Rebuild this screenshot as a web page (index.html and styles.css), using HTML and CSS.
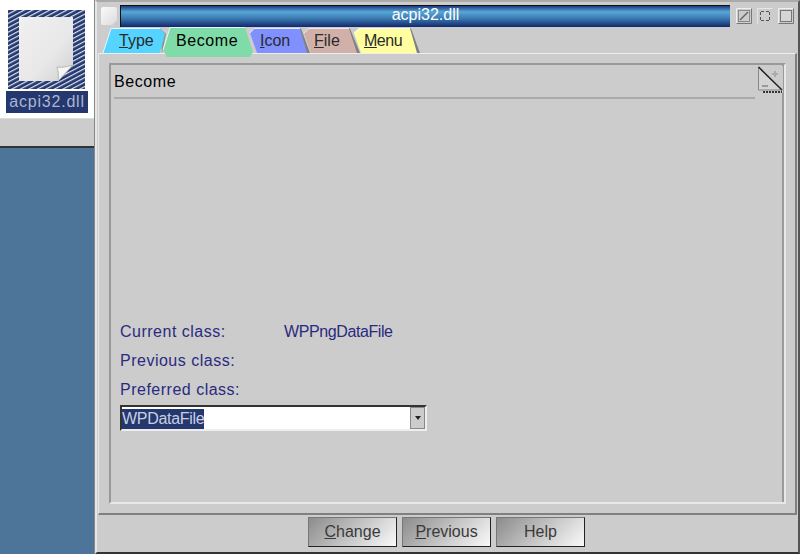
FILE: index.html
```html
<!DOCTYPE html>
<html lang="en">
<head>
<meta charset="utf-8">
<title>acpi32.dll</title>
<link rel="stylesheet" href="styles.css">
</head>
<body>
<div class="desktop">
  <aside class="folder">
    <div class="icon-pane">
      <svg class="doc" width="82" height="80" viewBox="0 0 82 80">
        <defs>
          <pattern id="hatch" width="4" height="4" patternUnits="userSpaceOnUse" patternTransform="rotate(-28)">
            <rect width="4" height="4" fill="#24386f"/>
            <rect width="4" height="1.2" fill="#dfe4ee"/>
          </pattern>
          <linearGradient id="paper" x1="0" y1="0" x2="1" y2="1">
            <stop offset="0" stop-color="#f0f0f0"/>
            <stop offset=".6" stop-color="#e8e8e8"/>
            <stop offset="1" stop-color="#cfcfcf"/>
          </linearGradient>
        </defs>
        <rect x="2" y="0" width="77" height="79" fill="url(#hatch)"/>
        <path d="M.5 37V79.500H81.500V37" fill="none" stroke="#fff" stroke-dasharray="2 1"/>
        <path d="M13 7H67V55L52 71H13Z" fill="url(#paper)"/>
        <path d="M52 71C53 66 52 60 51 57C57 58 63 56 67 55Z" fill="#f6f6f6" stroke="#b8b8b8"/>
      </svg>
      <div class="file-name">acpi32.dll</div>
    </div>
    <div class="folder-strip"></div>
  </aside>
  <main class="window">
    <header class="titlebar">
      <span class="sysmenu"></span>
      <h1 class="title">acpi32.dll</h1>
      <div class="controls">
        <svg width="16" height="16" viewBox="0 0 16 16"><path d="M.5 15.500V.5H15.500" fill="none" stroke="#f0f0f0"/><path d="M.5 15.500H15.500V.5" fill="none" stroke="#777"/><rect x="2.500" y="2.500" width="11" height="11" fill="none" stroke="#8a8a8a"/><path d="M4 12L12 4" stroke="#666" stroke-width="1.500"/></svg>
        <svg width="16" height="16" viewBox="0 0 16 16"><path d="M.5 15.500V.5H15.500" fill="none" stroke="#e6e6e6"/><path d="M4 3.500H7M9 3.500H12M4 12.500H7M9 12.500H12M3.500 4V7M3.500 9V12M12.500 4V7M12.500 9V12" stroke="#555"/></svg>
        <svg width="16" height="16" viewBox="0 0 16 16"><path d="M.5 15.500V.5H15.500" fill="none" stroke="#f0f0f0"/><path d="M.5 15.500H15.500V.5" fill="none" stroke="#777"/><rect x="2.500" y="2.500" width="11" height="11" fill="#d6d6d6" stroke="#777"/></svg>
      </div>
    </header>
    <nav class="tabs">
      <div class="tab tab-type"><svg class="tab-shape" width="65" height="25" viewBox="0 0 65 25"><path d="M57 .5L63 6L59 25" fill="#8a8a8a"/><path d="M0 25L8 .5H57L62 6L57 25Z" fill="#55d4ff"/><path d="M0 25L8 .5H57" fill="none" stroke="#e8f8ff"/></svg><span class="tab-label"><u>T</u>ype</span></div>
      <div class="tab tab-become"><svg class="tab-shape" width="92" height="30" viewBox="0 0 92 30"><path d="M0 23L7 .5H82L90 25L87 30H4Z" fill="#7fdca8"/><path d="M0 23L7 .5H82" fill="none" stroke="#eafaf0"/></svg><span class="tab-label"><span class="tab-current">Become</span></span></div>
      <div class="tab tab-icon"><svg class="tab-shape" width="58" height="25" viewBox="0 0 58 25"><path d="M50 .5L59 25H54L48 .5Z" fill="#808080"/><path d="M-1 5L3 .5H49L56 25H6Z" fill="#8090ff"/><path d="M-1 5L3 .5H49" fill="none" stroke="#e4e8ff"/></svg><span class="tab-label"><u>I</u>con</span></div>
      <div class="tab tab-file"><svg class="tab-shape" width="58" height="25" viewBox="0 0 58 25"><path d="M46 .5L56 25H52L44 .5Z" fill="#808080"/><path d="M0 5L5 .5H45L53 25H7Z" fill="#d0b0a8"/><path d="M0 5L5 .5H45" fill="none" stroke="#f2e8e4"/></svg><span class="tab-label"><u>F</u>ile</span></div>
      <div class="tab tab-menu"><svg class="tab-shape" width="67" height="25" viewBox="0 0 67 25"><path d="M57 .5L66 25H62L55 .5Z" fill="#808080"/><path d="M0 5L5 .5H56L63 25H7Z" fill="#ffffa0"/><path d="M0 5L5 .5H56" fill="none" stroke="#fffff0"/></svg><span class="tab-label"><u>M</u>enu</span></div>
    </nav>
    <section class="notebook">
      <div class="page">
        <div class="page-head">
          <h2 class="page-title">Become</h2>
          <svg class="pager" width="25" height="27" viewBox="0 0 25 27"><path d="M.5 1V24H24Z" fill="#d4d4d4" stroke="#888"/><path d="M.5 1L24 24" stroke="#222" stroke-width="1.500"/><path d="M5 26H24" stroke="#333" stroke-width="2" stroke-dasharray="2 1"/><path d="M4 20H10" stroke="#999" stroke-width="2"/><path d="M14 8H20M17 5V11" stroke="#aaa" stroke-width="2"/></svg>
        </div>
        <div class="form">
          <div class="row"><span class="label">Current class:</span><span class="value">WPPngDataFile</span></div>
          <div class="row"><span class="label">Previous class:</span></div>
          <div class="row"><span class="label">Preferred class:</span></div>
          <div class="combo">
            <div class="combo-field"><span class="combo-selected">WPDataFile</span></div>
            <div class="combo-btn"><span class="combo-arrow"></span></div>
          </div>
        </div>
      </div>
    </section>
    <footer class="buttons">
      <button class="btn"><u>C</u>hange</button>
      <button class="btn"><u>P</u>revious</button>
      <button class="btn">Help</button>
    </footer>
  </main>
</div>
</body>
</html>
```
FILE: styles.css
```css
* { box-sizing: border-box; }
html, body { margin: 0; padding: 0; }
body { width: 800px; height: 554px; overflow: hidden; font-family: "Liberation Sans", Arial, sans-serif; }
.desktop { position: relative; width: 800px; height: 554px; background: #4d7599; }
.folder { width: 95px; }
.icon-pane { height: 118px; background: #fff; display: flex; flex-direction: column; align-items: center; padding: 10px 1px 0 0; }
.doc { display: block; flex: none; }
.file-name { width: 82px; height: 22px; margin-top: 1px; background: #24386f; color: #aab6d0; font-size: 16px; line-height: 22px; text-align: center; letter-spacing: .8px; }
.folder-strip { height: 30px; background: #cccccc; border-top: 1px solid #ddd; border-bottom: 2px solid #333; }
.window { position: absolute; left: 95px; top: 0; width: 705px; height: 554px; background: #cccccc; border: 2px solid; border-color: #aaa #555 #333 #e6e6e6; box-shadow: -1px 0 0 #888; display: flex; flex-direction: column; padding-top: 3px; }
.titlebar { height: 22px; display: flex; align-items: stretch; padding: 0 1px 0 4px; gap: 3px; }
.sysmenu { width: 16px; height: 18px; margin-top: 2px; background: linear-gradient(135deg, #fafafa, #e2e2e2 80%, #bbb); border-radius: 2px; }
.title { flex: 1; margin: 0; height: 22px; border-left: 1px solid #111; border-top: 1px solid #111; background: linear-gradient(#1c3a80 0, #58a8d8 28%, #3a78b0 60%, #12296c 100%); color: #fff; font-size: 16px; font-weight: 400; line-height: 18px; text-align: center; }
.controls { width: 64px; display: flex; justify-content: space-between; align-items: center; padding: 0 3px; }
.tabs { height: 25px; margin-top: 1px; position: relative; z-index: 1; display: flex; padding-left: 6px; }
.tab { position: relative; height: 25px; flex: none; }
.tab-shape { position: absolute; left: 0; top: 0; display: block; overflow: visible; }
.tab-label { position: relative; display: block; color: #2a2a2a; font-size: 16px; line-height: 26px; }
.tab-type { width: 60px; }
.tab-type .tab-label { padding-left: 16px; }
.tab-become { width: 88px; margin-top: -1px; height: 30px; }
.tab-become .tab-label { padding-left: 13px; color: #000; line-height: 28px; letter-spacing: .6px; }
.tab-icon { width: 53px; }
.tab-icon .tab-label { padding-left: 9px; }
.tab-file { width: 50px; }
.tab-file .tab-label { padding-left: 10px; }
.tab-menu { width: 67px; }
.tab-menu .tab-label { padding-left: 10px; letter-spacing: -.5px; }
.notebook { margin: 0 1px 0 1px; height: 462px; border-top: 1px solid #eee; border-left: 1px solid #e8e8e8; border-bottom: 2px solid #808080; border-right: 2px solid #808080; padding: 9px 0 0 10px; }
.page { width: 677px; height: 441px; border: 2px solid; border-color: #999 #e8e8e8 #e8e8e8 #999; box-shadow: inset -2px 0 0 #9a9a9a; padding: 0 4px 0 3px; display: flex; flex-direction: column; }
.page-head { height: 34px; display: flex; justify-content: space-between; align-items: flex-start; }
.page-title { margin: 0; width: 641px; height: 34px; border-bottom: 2px solid #aaa; font-size: 16px; font-weight: 400; line-height: 34px; letter-spacing: .6px; color: #000; }
.pager { flex: none; margin: 1px -3px 0 0; background: #cccccc; }
.form { margin-top: 224px; padding: 0 0 0 6px; color: #2a2a80; font-size: 16px; }
.row { height: 29px; display: flex; line-height: 18px; }
.label { width: 164px; letter-spacing: .5px; }
.value { letter-spacing: -.4px; }
.combo { margin-top: -5px; width: 307px; height: 26px; display: flex; border: 2px solid; border-color: #333 #eee #eee #333; background: #fff; }
.combo-field { flex: 1; padding: 2px 0 0 0; }
.combo-selected { display: inline-block; background: #24386f; color: #c8d0e0; height: 20px; line-height: 20px; letter-spacing: -.3px; }
.combo-btn { width: 15px; background: #ccc; border: 1px solid #888; display: flex; align-items: center; justify-content: center; }
.combo-arrow { width: 0; height: 0; border: 3px solid transparent; border-top: 4px solid #222; border-bottom: 0; }
.buttons { flex: 1; display: flex; justify-content: center; gap: 5px; padding-top: 2px; padding-right: 2px; }
.btn { width: 89px; height: 30px; padding: 0; font: 16px "Liberation Sans", Arial, sans-serif; color: #3a3a3a; background: linear-gradient(135deg, #8c8c8c, #fafafa); border: 1px solid; border-color: #777 #222 #222 #777; }
```
